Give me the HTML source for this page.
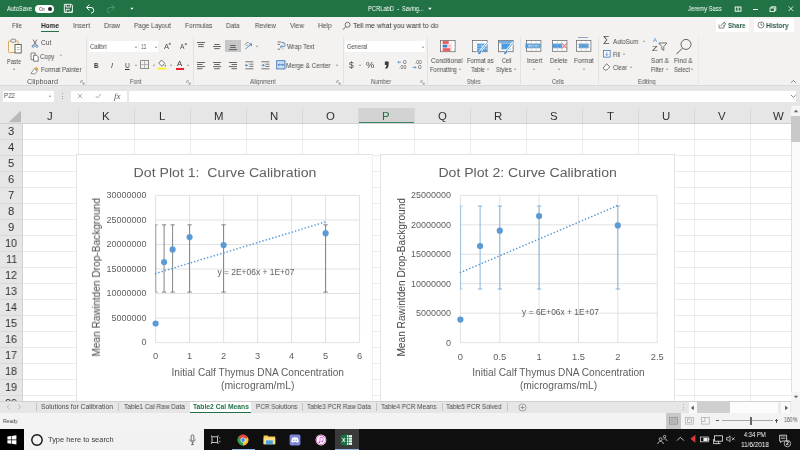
<!DOCTYPE html>
<html lang="en">
<head>
<meta charset="utf-8">
<title>PCRLabD - Excel</title>
<style>
html,body{margin:0;padding:0;}
body{width:800px;height:450px;overflow:hidden;position:relative;background:#e6e6e6;font-family:"Liberation Sans",sans-serif;}
.sec{position:absolute;left:0;width:800px;overflow:hidden;}
.b{position:absolute;display:block;}
.t{position:absolute;white-space:nowrap;line-height:1;transform-origin:0 50%;will-change:transform;}
svg text{font-family:"Liberation Sans",sans-serif;white-space:pre;}
svg.b{will-change:transform;}
</style>
</head>
<body>
<div class="sec" id="titlebar" style="top:0.0px;height:17.0px;background:#217346;">
<span class="t" style="left:7.0px;top:5.9px;font-size:6.5px;color:#fff;transform:scaleX(0.887);">AutoSave</span>
<div class="b" style="left:35.0px;top:4.5px;width:19.0px;height:8.5px;background:#fff;border-radius:4.5px;"></div>
<span class="t" style="left:38.5px;top:6.8px;font-size:5.0px;color:#333;transform:scaleX(0.900);">On</span>
<div class="b" style="left:48.3px;top:6.7px;width:4.0px;height:4.0px;background:#222;border-radius:50%;"></div>
<svg class="b" style="left:63.4px;top:2.6px" width="10.8" height="10.8" viewBox="0 0 12 12"><path d="M1.5 1.5h8l1 1v8h-9z M3.5 1.5v3h5v-3 M3.5 10.5v-3.5h4" fill="none" stroke="#fff" stroke-width="1"/><path d="M6.5 8.5l2 2 2-2.5" fill="none" stroke="#fff" stroke-width="0.9"/></svg>
<svg class="b" style="left:84.0px;top:3.0px" width="12" height="12" viewBox="0 0 12 12"><path d="M5.5 1.5l-3 3 3 3 M2.5 4.5h4.5a2.8 2.8 0 0 1 0 5.6" fill="none" stroke="#fff" stroke-width="1"/></svg>
<svg class="b" style="left:105.0px;top:3.0px" width="12" height="12" viewBox="0 0 12 12"><path d="M6.5 1.5l3 3-3 3 M9.5 4.5h-4.5a2.8 2.8 0 0 0 0 5.6" fill="none" stroke="#4f9470" stroke-width="1"/></svg>
<svg class="b" style="left:128.6px;top:7.4px" width="6" height="4" viewBox="0 0 6 4"><path d="M1.2 0.8h3.4l-1.7 2z" fill="#fff"/></svg>
<span class="t" style="left:367.6px;top:5.6px;font-size:6.8px;color:#fff;transform:scaleX(0.849);">PCRLabD</span>
<span class="t" style="left:396.8px;top:5.6px;font-size:6.8px;color:#fff;transform:scaleX(1.060);">-</span>
<span class="t" style="left:402.4px;top:5.6px;font-size:6.8px;color:#fff;transform:scaleX(0.816);">Saving...</span>
<svg class="b" style="left:427.4px;top:7.4px" width="6" height="4" viewBox="0 0 6 4"><path d="M1.1 0.8h3.6l-1.8 2.1z" fill="#fff"/></svg>
<span class="t" style="left:688.0px;top:5.6px;font-size:6.8px;color:#fff;transform:scaleX(0.855);">Jeremy Sass</span>
<svg class="b" style="left:734.0px;top:5.6px" width="9" height="7" viewBox="0 0 9 7"><rect x="1.2" y="1" width="5.8" height="4.2" fill="none" stroke="#fff" stroke-width="0.9"/><path d="M4.1 1v4.2" stroke="#fff" stroke-width="0.9"/></svg>
<div class="b" style="left:752.5px;top:8.6px;width:5.0px;height:0.9px;background:#fff;"></div>
<svg class="b" style="left:768.0px;top:4.6px" width="10" height="9" viewBox="0 0 10 9"><rect x="2" y="3" width="4.4" height="3.6" fill="none" stroke="#fff" stroke-width="0.8"/><path d="M3.2 3v-1.2h4.6v3.6h-1.4" fill="none" stroke="#fff" stroke-width="0.9"/></svg>
<svg class="b" style="left:786.0px;top:4.0px" width="10" height="9" viewBox="0 0 10 9"><path d="M2.6 2.4l4.6 4.6M7.2 2.4l-4.6 4.6" stroke="#fff" stroke-width="0.8"/></svg>
</div>
<div class="sec" id="menutabs" style="top:17.0px;height:16.0px;background:#f3f2f1;">
<span class="t" style="left:12.0px;top:4.9px;font-size:7.3px;color:#4c4c4c;transform:scaleX(0.850);">File</span>
<span class="t" style="left:73.0px;top:4.9px;font-size:7.3px;color:#4c4c4c;transform:scaleX(0.931);">Insert</span>
<span class="t" style="left:104.0px;top:4.9px;font-size:7.3px;color:#4c4c4c;transform:scaleX(0.939);">Draw</span>
<span class="t" style="left:134.0px;top:4.9px;font-size:7.3px;color:#4c4c4c;transform:scaleX(0.893);">Page Layout</span>
<span class="t" style="left:184.6px;top:4.9px;font-size:7.3px;color:#4c4c4c;transform:scaleX(0.901);">Formulas</span>
<span class="t" style="left:226.4px;top:4.9px;font-size:7.3px;color:#4c4c4c;transform:scaleX(0.882);">Data</span>
<span class="t" style="left:254.6px;top:4.9px;font-size:7.3px;color:#4c4c4c;transform:scaleX(0.869);">Review</span>
<span class="t" style="left:289.6px;top:4.9px;font-size:7.3px;color:#4c4c4c;transform:scaleX(0.892);">View</span>
<span class="t" style="left:318.0px;top:4.9px;font-size:7.3px;color:#4c4c4c;transform:scaleX(0.906);">Help</span>
<span class="t" style="left:41.0px;top:4.9px;font-size:7.3px;color:#262626;transform:scaleX(0.887);font-weight:bold;">Home</span>
<div class="b" style="left:41.0px;top:13.6px;width:18.4px;height:1.3px;background:#217346;"></div>
<svg class="b" style="left:342.0px;top:4.0px" width="10" height="10" viewBox="0 0 10 10"><circle cx="5.6" cy="3.8" r="2.5" fill="none" stroke="#555" stroke-width="0.8"/><path d="M3.8 5.6l-2.8 3" stroke="#555" stroke-width="0.9"/></svg>
<span class="t" style="left:353.0px;top:4.9px;font-size:7.3px;color:#333;transform:scaleX(0.948);">Tell me what you want to do</span>
<div class="b" style="left:715.6px;top:2.0px;width:33.4px;height:12.5px;background:#fff;"></div>
<div class="b" style="left:753.6px;top:2.0px;width:40.6px;height:12.5px;background:#fff;"></div>
<svg class="b" style="left:718.0px;top:4.0px" width="8" height="8" viewBox="0 0 8 8"><path d="M1 3.5v3.5h5v-2.5 M3 5.2c0.3-1.8 1.4-2.8 3-2.9v-1.3l1.8 2-1.8 2v-1.3" fill="none" stroke="#555" stroke-width="0.7"/></svg>
<span class="t" style="left:727.6px;top:4.7px;font-size:7.3px;color:#2a5a43;transform:scaleX(0.858);font-weight:bold;">Share</span>
<svg class="b" style="left:757.0px;top:4.0px" width="8" height="8" viewBox="0 0 8 8"><circle cx="4" cy="4" r="3" fill="none" stroke="#555" stroke-width="0.7"/><path d="M4 2.2v2h1.6" fill="none" stroke="#555" stroke-width="0.7"/></svg>
<span class="t" style="left:766.4px;top:4.7px;font-size:7.3px;color:#2a5a43;transform:scaleX(0.899);font-weight:bold;">History</span>
</div>
<div class="sec" id="ribbon" style="top:33.0px;height:53.4px;background:#f3f2f1;border-bottom:1px solid #dadada;box-sizing:border-box;">
<div class="b" style="left:86.3px;top:4.0px;width:0.8px;height:47.0px;background:#e1e1e1;"></div>
<div class="b" style="left:192.5px;top:4.0px;width:0.8px;height:47.0px;background:#e1e1e1;"></div>
<div class="b" style="left:342.8px;top:4.0px;width:0.8px;height:47.0px;background:#e1e1e1;"></div>
<div class="b" style="left:426.6px;top:4.0px;width:0.8px;height:47.0px;background:#e1e1e1;"></div>
<div class="b" style="left:519.8px;top:4.0px;width:0.8px;height:47.0px;background:#e1e1e1;"></div>
<div class="b" style="left:598.0px;top:4.0px;width:0.8px;height:47.0px;background:#e1e1e1;"></div>
<div class="b" style="left:697.6px;top:4.0px;width:0.8px;height:47.0px;background:#e8e8e8;"></div>
<svg class="b" style="left:7.4px;top:4.0px" width="16" height="18" viewBox="0 0 16 18"><rect x="1.5" y="4" width="9.5" height="11.5" rx="0.8" fill="#fbf3e3" stroke="#d9a864" stroke-width="1"/><rect x="4" y="2.2" width="4.6" height="3" rx="0.8" fill="#f3f3f3" stroke="#777" stroke-width="0.8"/><rect x="8" y="7.5" width="6.2" height="8.5" fill="#fff" stroke="#555" stroke-width="0.9"/><path d="M9.8 10.5h2.6M9.8 12.5h2.6" stroke="#888" stroke-width="0.6"/></svg>
<span class="t" style="left:7.0px;top:25.6px;font-size:6.6px;color:#4c4c4c;transform:scaleX(0.830);">Paste</span>
<svg class="b" style="left:12.0px;top:34.8px" width="4" height="3" viewBox="0 0 4 3"><path d="M0.8 0.8h2.4l-1.2 1.5z" fill="#7a7a7a"/></svg>
<svg class="b" style="left:31.0px;top:6.4px" width="8" height="9" viewBox="0 0 8 9"><path d="M2.2 0.6l3 5.6M5.8 0.6l-3 5.6" stroke="#555" stroke-width="0.8"/><circle cx="2.2" cy="7.2" r="1.1" fill="none" stroke="#3a78b8" stroke-width="0.8"/><circle cx="5.8" cy="7.2" r="1.1" fill="none" stroke="#3a78b8" stroke-width="0.8"/></svg>
<span class="t" style="left:40.5px;top:6.5px;font-size:6.6px;color:#4c4c4c;transform:scaleX(0.974);">Cut</span>
<svg class="b" style="left:29.5px;top:19.2px" width="10" height="10" viewBox="0 0 10 10"><path d="M1 1h4.2v6.6h-4.2z" fill="#fff" stroke="#666" stroke-width="0.8"/><path d="M3.6 3.2h3l1.6 1.6v4.4h-4.6z" fill="#fff" stroke="#555" stroke-width="0.8"/></svg>
<span class="t" style="left:40.0px;top:20.9px;font-size:6.6px;color:#4c4c4c;transform:scaleX(0.941);">Copy</span>
<svg class="b" style="left:58.6px;top:21.4px" width="4" height="3" viewBox="0 0 4 3"><path d="M0.8 0.8h2.4l-1.2 1.5z" fill="#999"/></svg>
<svg class="b" style="left:30.0px;top:33.0px" width="10" height="9" viewBox="0 0 10 9"><path d="M6.2 0.8l2.6 2.4-1.6 1.6-2.6-2.4z" fill="#e8a33c"/><path d="M4.4 2.6l2.8 2.6-2.4 2.8-3.8-0.6z" fill="#fff" stroke="#666" stroke-width="0.7"/></svg>
<span class="t" style="left:40.6px;top:34.1px;font-size:6.6px;color:#4c4c4c;transform:scaleX(0.926);">Format Painter</span>
<span class="t" style="left:27.0px;top:45.9px;font-size:6.3px;color:#555;transform:scaleX(1.150);">Clipboard</span>
<svg class="b" style="left:80.0px;top:47.0px" width="5" height="5" viewBox="0 0 5 5"><path d="M0.8 0.8h2.2M0.8 0.8v2.2 M2.2 2.2l2 2m0-1.6v1.6h-1.6" fill="none" stroke="#777" stroke-width="0.6"/></svg>
<div class="b" style="left:88.7px;top:8.3px;width:49.0px;height:10.8px;background:#fff;"></div>
<div class="b" style="left:139.0px;top:8.3px;width:19.0px;height:10.8px;background:#fff;"></div>
<span class="t" style="left:90.3px;top:11.1px;font-size:6.6px;color:#4c4c4c;transform:scaleX(0.893);">Calibri</span>
<svg class="b" style="left:133.8px;top:12.5px" width="4" height="3" viewBox="0 0 4 3"><path d="M0.8 0.8h2.4l-1.2 1.5z" fill="#7a7a7a"/></svg>
<span class="t" style="left:141.0px;top:11.1px;font-size:6.6px;color:#4c4c4c;transform:scaleX(0.759);">11</span>
<svg class="b" style="left:153.5px;top:12.5px" width="4" height="3" viewBox="0 0 4 3"><path d="M0.8 0.8h2.4l-1.2 1.5z" fill="#7a7a7a"/></svg>
<span class="t" style="left:163.5px;top:10.4px;font-size:7.6px;color:#4c4c4c;transform:scaleX(1.006);">A</span>
<svg class="b" style="left:168.4px;top:9.0px" width="4" height="3" viewBox="0 0 4 3"><path d="M0.4 2.4l1.4-1.8 1.4 1.8z" fill="#555"/></svg>
<span class="t" style="left:180.0px;top:11.3px;font-size:6.6px;color:#4c4c4c;transform:scaleX(0.999);">A</span>
<svg class="b" style="left:184.4px;top:9.6px" width="4" height="3" viewBox="0 0 4 3"><path d="M0.4 0.6l1.4 1.8 1.4-1.8z" fill="#555"/></svg>
<span class="t" style="left:93.6px;top:28.9px;font-size:7.0px;color:#333;transform:scaleX(0.870);font-weight:bold;">B</span>
<span class="t" style="left:110.6px;top:28.9px;font-size:7.0px;color:#333;transform:scaleX(1.028);font-style:italic;">I</span>
<span class="t" style="left:124.8px;top:28.7px;font-size:7.0px;color:#333;transform:scaleX(0.910);text-decoration:underline;">U</span>
<svg class="b" style="left:133.5px;top:30.5px" width="4" height="3" viewBox="0 0 4 3"><path d="M0.8 0.8h2.4l-1.2 1.5z" fill="#8a8a8a"/></svg>
<svg class="b" style="left:140.0px;top:27.0px" width="10" height="10" viewBox="0 0 10 10"><rect x="0.6" y="0.6" width="8" height="8" fill="none" stroke="#777" stroke-width="0.8"/><path d="M4.6 0.6v8M0.6 4.6h8" stroke="#999" stroke-width="0.7"/></svg>
<svg class="b" style="left:151.5px;top:30.5px" width="4" height="3" viewBox="0 0 4 3"><path d="M0.8 0.8h2.4l-1.2 1.5z" fill="#8a8a8a"/></svg>
<svg class="b" style="left:157.0px;top:26.0px" width="10" height="11" viewBox="0 0 10 11"><path d="M4.6 1l3.2 3.4-3 2.8-3-3z" fill="#fff" stroke="#555" stroke-width="0.8"/><path d="M8.2 5.4c0.8 1 0.8 1.8 0 2-0.8-0.2-0.8-1 0-2z" fill="#555"/><rect x="0.4" y="8.6" width="9" height="2" fill="#ffee33"/></svg>
<svg class="b" style="left:168.5px;top:30.5px" width="4" height="3" viewBox="0 0 4 3"><path d="M0.8 0.8h2.4l-1.2 1.5z" fill="#8a8a8a"/></svg>
<span class="t" style="left:177.4px;top:27.4px;font-size:7.2px;color:#333;transform:scaleX(1.083);">A</span>
<div class="b" style="left:175.6px;top:35.0px;width:8.6px;height:2.0px;background:#e8212a;"></div>
<svg class="b" style="left:186.0px;top:30.5px" width="4" height="3" viewBox="0 0 4 3"><path d="M0.8 0.8h2.4l-1.2 1.5z" fill="#8a8a8a"/></svg>
<span class="t" style="left:130.0px;top:46.3px;font-size:6.3px;color:#555;transform:scaleX(0.904);">Font</span>
<svg class="b" style="left:185.5px;top:47.0px" width="5" height="5" viewBox="0 0 5 5"><path d="M0.8 0.8h2.2M0.8 0.8v2.2 M2.2 2.2l2 2m0-1.6v1.6h-1.6" fill="none" stroke="#777" stroke-width="0.6"/></svg>
<div class="b" style="left:225.3px;top:7.4px;width:15.8px;height:12.0px;background:#c6c6c6;"></div>
<svg class="b" style="left:197.3px;top:9.2px" width="8" height="7.3" viewBox="0 0 8 7.3"><rect x="0.0" y="0.0" width="8.0" height="0.9" fill="#555"/><rect x="1.2" y="2.1" width="5.5" height="0.9" fill="#555"/><rect x="1.2" y="4.2" width="5.5" height="0.9" fill="#555"/></svg>
<svg class="b" style="left:213.3px;top:10.6px" width="8" height="7.3" viewBox="0 0 8 7.3"><rect x="1.2" y="0.0" width="5.5" height="0.9" fill="#555"/><rect x="0.0" y="2.1" width="8.0" height="0.9" fill="#555"/><rect x="1.2" y="4.2" width="5.5" height="0.9" fill="#555"/></svg>
<svg class="b" style="left:229.3px;top:12.2px" width="8" height="7.3" viewBox="0 0 8 7.3"><rect x="1.2" y="0.0" width="5.5" height="0.9" fill="#555"/><rect x="1.2" y="2.1" width="5.5" height="0.9" fill="#555"/><rect x="0.0" y="4.2" width="8.0" height="0.9" fill="#555"/></svg>
<svg class="b" style="left:244.0px;top:8.0px" width="10" height="10" viewBox="0 0 10 10"><path d="M1.2 8.2l6.4-5.4M7.6 2.8l-2.6 0.2M7.6 2.8l-0.4 2.6" stroke="#3a78b8" stroke-width="0.8" fill="none"/><path d="M1 3.6l2.6-2.6 1 1M2.4 5l1.6-1.6" stroke="#555" stroke-width="0.7" fill="none"/></svg>
<svg class="b" style="left:254.5px;top:12.0px" width="4" height="3" viewBox="0 0 4 3"><path d="M0.8 0.8h2.4l-1.2 1.5z" fill="#8a8a8a"/></svg>
<svg class="b" style="left:277.0px;top:8.0px" width="9" height="10" viewBox="0 0 9 10"><path d="M0.6 1h3.4M0.6 3.4h2.4M0.6 8.2h2.4" stroke="#555" stroke-width="0.8"/><path d="M4.4 1.6h1.6a2 2 0 0 1 0 4.2h-2.6M4.6 4.4l-1.4 1.4 1.4 1.4" stroke="#3a78b8" stroke-width="0.8" fill="none"/><path d="M6 0.6v8.6" stroke="#888" stroke-width="0.5" stroke-dasharray="0.8 0.8"/></svg>
<span class="t" style="left:286.6px;top:10.5px;font-size:6.6px;color:#4c4c4c;transform:scaleX(0.930);">Wrap Text</span>
<svg class="b" style="left:197.3px;top:28.6px" width="8" height="9.4" viewBox="0 0 8 9.4"><rect x="0.0" y="0.0" width="8.0" height="0.9" fill="#555"/><rect x="0.0" y="2.1" width="5.5" height="0.9" fill="#555"/><rect x="0.0" y="4.2" width="8.0" height="0.9" fill="#555"/><rect x="0.0" y="6.3" width="5.5" height="0.9" fill="#555"/></svg>
<svg class="b" style="left:213.3px;top:28.6px" width="8" height="9.4" viewBox="0 0 8 9.4"><rect x="0.0" y="0.0" width="8.0" height="0.9" fill="#555"/><rect x="1.2" y="2.1" width="5.5" height="0.9" fill="#555"/><rect x="0.0" y="4.2" width="8.0" height="0.9" fill="#555"/><rect x="1.2" y="6.3" width="5.5" height="0.9" fill="#555"/></svg>
<svg class="b" style="left:229.3px;top:28.6px" width="8" height="9.4" viewBox="0 0 8 9.4"><rect x="0.0" y="0.0" width="8.0" height="0.9" fill="#555"/><rect x="2.5" y="2.1" width="5.5" height="0.9" fill="#555"/><rect x="0.0" y="4.2" width="8.0" height="0.9" fill="#555"/><rect x="2.5" y="6.3" width="5.5" height="0.9" fill="#555"/></svg>
<svg class="b" style="left:245.0px;top:28.0px" width="9" height="9" viewBox="0 0 9 9"><path d="M0.4 0.8h8M0.4 7.8h8M4.4 3.2h4M4.4 5.4h4" stroke="#555" stroke-width="0.8"/><path d="M3.2 4.3h-2.8M1.6 3l-1.3 1.3 1.3 1.3" stroke="#3a78b8" stroke-width="0.8" fill="none"/></svg>
<svg class="b" style="left:261.0px;top:28.0px" width="9" height="9" viewBox="0 0 9 9"><path d="M0.4 0.8h8M0.4 7.8h8M4.4 3.2h4M4.4 5.4h4" stroke="#555" stroke-width="0.8"/><path d="M0.4 4.3h2.8M2 3l1.3 1.3-1.3 1.3" stroke="#3a78b8" stroke-width="0.8" fill="none"/></svg>
<svg class="b" style="left:275.5px;top:27.4px" width="10" height="10" viewBox="0 0 10 10"><rect x="0.7" y="0.7" width="8.2" height="8.2" fill="#cfe2f6" stroke="#3a78b8" stroke-width="0.9"/><path d="M2.2 4.8h5.2M3.4 3.6l-1.2 1.2 1.2 1.2M6.2 3.6l1.2 1.2-1.2 1.2" stroke="#2b5f9e" stroke-width="0.7" fill="none"/></svg>
<span class="t" style="left:286.0px;top:29.5px;font-size:6.6px;color:#4c4c4c;transform:scaleX(0.959);">Merge &amp; Center</span>
<svg class="b" style="left:335.0px;top:31.0px" width="4" height="3" viewBox="0 0 4 3"><path d="M0.8 0.8h2.4l-1.2 1.5z" fill="#8a8a8a"/></svg>
<span class="t" style="left:250.4px;top:46.3px;font-size:6.3px;color:#555;transform:scaleX(0.914);">Alignment</span>
<svg class="b" style="left:336.0px;top:47.0px" width="5" height="5" viewBox="0 0 5 5"><path d="M0.8 0.8h2.2M0.8 0.8v2.2 M2.2 2.2l2 2m0-1.6v1.6h-1.6" fill="none" stroke="#777" stroke-width="0.6"/></svg>
<div class="b" style="left:345.0px;top:8.3px;width:79.7px;height:10.8px;background:#fff;"></div>
<span class="t" style="left:346.6px;top:11.1px;font-size:6.6px;color:#4c4c4c;transform:scaleX(0.869);">General</span>
<svg class="b" style="left:420.5px;top:12.5px" width="4" height="3" viewBox="0 0 4 3"><path d="M0.8 0.8h2.4l-1.2 1.5z" fill="#7a7a7a"/></svg>
<span class="t" style="left:349.4px;top:28.3px;font-size:8.4px;color:#444;transform:scaleX(0.985);">$</span>
<svg class="b" style="left:357.6px;top:31.0px" width="4" height="3" viewBox="0 0 4 3"><path d="M0.8 0.8h2.4l-1.2 1.5z" fill="#8a8a8a"/></svg>
<span class="t" style="left:366.0px;top:28.5px;font-size:8.2px;color:#444;transform:scaleX(1.152);">%</span>
<span class="t" style="left:383.2px;top:12.9px;font-size:23.0px;color:#3a3a3a;transform:scaleX(1.158);font-weight:bold;">,</span>
<svg class="b" style="left:397.0px;top:27.0px" width="10" height="10" viewBox="0 0 10 10"><path d="M4.2 2.2h-3.4M2 1l-1.2 1.2 1.2 1.2" stroke="#3a78b8" stroke-width="0.7" fill="none"/></svg>
<span class="t" style="left:402.6px;top:28.0px;font-size:4.6px;color:#555;transform:scaleX(1.407);">0</span>
<span class="t" style="left:399.0px;top:32.8px;font-size:4.6px;color:#555;transform:scaleX(1.157);">.00</span>
<svg class="b" style="left:412.0px;top:27.0px" width="10" height="10" viewBox="0 0 10 10"><path d="M0.6 7.4h3.4M2.8 6.2l1.2 1.2-1.2 1.2" stroke="#3a78b8" stroke-width="0.7" fill="none"/></svg>
<span class="t" style="left:414.6px;top:28.0px;font-size:4.6px;color:#555;transform:scaleX(1.063);">.00</span>
<span class="t" style="left:417.8px;top:32.8px;font-size:4.6px;color:#555;transform:scaleX(1.407);">0</span>
<span class="t" style="left:371.0px;top:46.3px;font-size:6.3px;color:#555;transform:scaleX(0.893);">Number</span>
<svg class="b" style="left:420.0px;top:47.0px" width="5" height="5" viewBox="0 0 5 5"><path d="M0.8 0.8h2.2M0.8 0.8v2.2 M2.2 2.2l2 2m0-1.6v1.6h-1.6" fill="none" stroke="#777" stroke-width="0.6"/></svg>
<svg class="b" style="left:439.6px;top:7.0px" width="16" height="13" viewBox="0 0 16 13"><rect x="0.5" y="0.5" width="14.6" height="11.2" fill="#fff" stroke="#6a6a6a" stroke-width="0.8"/><rect x="2.4" y="1" width="6.4" height="3.2" fill="#ee5f63"/><rect x="2.4" y="4.5" width="5" height="3.2" fill="#3f7fc4"/><rect x="7.6" y="4.5" width="3.6" height="3.2" fill="#f7c3c4"/><rect x="2.4" y="8" width="8" height="3.2" fill="#ee5f63"/><path d="M0.5 4.3h14.6M0.5 7.9h14.6M2.3 0.5v11.2M11.6 0.5v11.2" stroke="#fff" stroke-width="0.5" opacity="0.8"/><path d="M8.9 0.9v3.4M11.6 0.9v10.6" stroke="#bbb" stroke-width="0.4"/></svg>
<span class="t" style="left:431.3px;top:25.0px;font-size:6.6px;color:#4c4c4c;transform:scaleX(0.954);">Conditional</span>
<span class="t" style="left:429.8px;top:33.5px;font-size:6.6px;color:#4c4c4c;transform:scaleX(0.850);">Formatting</span>
<svg class="b" style="left:458.0px;top:35.0px" width="4" height="3" viewBox="0 0 4 3"><path d="M0.8 0.8h2.4l-1.2 1.5z" fill="#8a8a8a"/></svg>
<svg class="b" style="left:472.2px;top:7.0px" width="17" height="15" viewBox="0 0 17 15"><rect x="0.5" y="0.5" width="14.6" height="11.2" fill="#fff" stroke="#6a6a6a" stroke-width="0.8"/><rect x="5" y="3.4" width="9.7" height="8" fill="#4a9be0"/><path d="M0.5 3.2h14.6M0.5 6h14.6M0.5 8.8h14.6M4.8 0.5v11.2M9.8 0.5v11.2" stroke="#fff" stroke-width="0.5" opacity="0.85"/><path d="M0.9 3.2h3.8M0.9 6h3.8M0.9 8.8h3.8M4.8 0.9v2.3M9.8 0.9v2.3" stroke="#bbb" stroke-width="0.4"/><path d="M15.2 2.6L7.6 12.2" stroke="#fff" stroke-width="2.4"/><path d="M15 2.8L8.4 11.2" stroke="#4a9be0" stroke-width="0.9"/><path d="M8.6 10.6l1 1-1.6 2.2-2 0.4 0.6-2z" fill="#3f8fd8"/></svg>
<span class="t" style="left:466.5px;top:25.0px;font-size:6.6px;color:#4c4c4c;transform:scaleX(0.892);">Format as</span>
<span class="t" style="left:470.6px;top:33.5px;font-size:6.6px;color:#4c4c4c;transform:scaleX(0.887);">Table</span>
<svg class="b" style="left:485.6px;top:35.0px" width="4" height="3" viewBox="0 0 4 3"><path d="M0.8 0.8h2.4l-1.2 1.5z" fill="#8a8a8a"/></svg>
<svg class="b" style="left:498.4px;top:7.0px" width="17" height="15" viewBox="0 0 17 15"><rect x="0.5" y="0.5" width="14.6" height="11.2" fill="#fff" stroke="#6a6a6a" stroke-width="0.8"/><rect x="0.9" y="0.9" width="13.8" height="2.4" fill="#6fb1ea"/><rect x="3.4" y="3.3" width="9" height="6" fill="#4a9be0"/><path d="M0.9 3.3h13.8M0.9 9.3h13.8M3.4 3.3v8M12.4 3.3v8" stroke="#ccc" stroke-width="0.4"/><path d="M15.2 2.6L7.6 12.2" stroke="#fff" stroke-width="2.4"/><path d="M15 2.8L8.4 11.2" stroke="#4a9be0" stroke-width="0.9"/><path d="M8.6 10.6l1 1-1.6 2.2-2 0.4 0.6-2z" fill="#3f8fd8"/></svg>
<span class="t" style="left:501.6px;top:25.0px;font-size:6.6px;color:#4c4c4c;transform:scaleX(0.827);">Cell</span>
<span class="t" style="left:496.0px;top:33.5px;font-size:6.6px;color:#4c4c4c;transform:scaleX(0.868);">Styles</span>
<svg class="b" style="left:512.6px;top:35.0px" width="4" height="3" viewBox="0 0 4 3"><path d="M0.8 0.8h2.4l-1.2 1.5z" fill="#8a8a8a"/></svg>
<span class="t" style="left:466.5px;top:46.3px;font-size:6.3px;color:#555;transform:scaleX(0.787);">Styles</span>
<svg class="b" style="left:525.3px;top:7.2px" width="17" height="13" viewBox="-1 0 17 13"><rect x="0.5" y="0.5" width="14.4" height="10.8" fill="#fff" stroke="#707070" stroke-width="0.8"/><rect x="-0.6" y="3.6" width="15.2" height="4.6" fill="#4a9be0"/><path d="M5.3 0.9v10M10.1 0.9v10M0.9 4.1h13.6M0.9 7.7h13.6" stroke="#b5b5b5" stroke-width="0.5" fill="none"/><path d="M2.4 5.9h10.6M3.8 4.9l-1.4 1 1.4 1" stroke="#fff" stroke-width="0.6" fill="none"/></svg>
<span class="t" style="left:526.5px;top:25.0px;font-size:6.6px;color:#4c4c4c;transform:scaleX(0.915);">Insert</span>
<svg class="b" style="left:532.0px;top:35.0px" width="4" height="3" viewBox="0 0 4 3"><path d="M0.8 0.8h2.4l-1.2 1.5z" fill="#8a8a8a"/></svg>
<svg class="b" style="left:550.5px;top:7.2px" width="17" height="13" viewBox="-1 0 17 13"><rect x="0.5" y="0.5" width="14.4" height="10.8" fill="#fff" stroke="#707070" stroke-width="0.8"/><rect x="0.5" y="3.6" width="9.6" height="4.6" fill="#4a9be0"/><path d="M5.3 0.9v10M10.1 0.9v10M0.9 4.1h13.6M0.9 7.7h13.6" stroke="#b5b5b5" stroke-width="0.5" fill="none"/><path d="M10 3.4l4.8 5M14.8 3.4l-4.8 5" stroke="#e0333c" stroke-width="0.8"/></svg>
<span class="t" style="left:550.4px;top:25.0px;font-size:6.6px;color:#4c4c4c;transform:scaleX(0.912);">Delete</span>
<svg class="b" style="left:557.0px;top:35.0px" width="4" height="3" viewBox="0 0 4 3"><path d="M0.8 0.8h2.4l-1.2 1.5z" fill="#8a8a8a"/></svg>
<svg class="b" style="left:575.2px;top:7.2px" width="17" height="13" viewBox="-1 0 17 13"><rect x="0.5" y="0.5" width="14.4" height="10.8" fill="#fff" stroke="#707070" stroke-width="0.8"/><rect x="2.8" y="3.6" width="9.8" height="4.6" fill="#4a9be0"/><path d="M5.3 0.9v10M10.1 0.9v10M0.9 4.1h13.6M0.9 7.7h13.6" stroke="#b5b5b5" stroke-width="0.5" fill="none"/></svg>
<div class="b" style="left:578.4px;top:4.4px;width:10.0px;height:1.1px;background:#8fa9c4;"></div>
<span class="t" style="left:573.8px;top:25.0px;font-size:6.6px;color:#4c4c4c;transform:scaleX(0.942);">Format</span>
<svg class="b" style="left:581.5px;top:35.0px" width="4" height="3" viewBox="0 0 4 3"><path d="M0.8 0.8h2.4l-1.2 1.5z" fill="#8a8a8a"/></svg>
<span class="t" style="left:552.0px;top:46.3px;font-size:6.3px;color:#555;transform:scaleX(0.857);">Cells</span>
<span class="t" style="left:602.6px;top:2.9px;font-size:10.4px;color:#505050;transform:scaleX(1.027);">Σ</span>
<span class="t" style="left:612.5px;top:5.7px;font-size:6.6px;color:#4c4c4c;transform:scaleX(0.932);">AutoSum</span>
<svg class="b" style="left:641.5px;top:7.4px" width="4" height="3" viewBox="0 0 4 3"><path d="M0.8 0.8h2.4l-1.2 1.5z" fill="#8a8a8a"/></svg>
<svg class="b" style="left:602.5px;top:17.0px" width="8" height="8" viewBox="0 0 8 8"><rect x="0.5" y="0.5" width="6.6" height="6.6" fill="#fff" stroke="#3a78b8" stroke-width="0.8"/><path d="M3.8 1.8v3.6M2.4 4.2l1.4 1.4 1.4-1.4" stroke="#3a78b8" stroke-width="0.7" fill="none"/></svg>
<span class="t" style="left:613.0px;top:18.7px;font-size:6.6px;color:#4c4c4c;transform:scaleX(0.830);">Fill</span>
<svg class="b" style="left:621.5px;top:20.4px" width="4" height="3" viewBox="0 0 4 3"><path d="M0.8 0.8h2.4l-1.2 1.5z" fill="#8a8a8a"/></svg>
<svg class="b" style="left:602.0px;top:30.0px" width="9" height="8" viewBox="0 0 9 8"><path d="M4.6 0.8l3.2 3-3 3.2h-2l-1.8-1.8z" fill="#fff" stroke="#555" stroke-width="0.8"/></svg>
<span class="t" style="left:613.0px;top:31.7px;font-size:6.6px;color:#4c4c4c;transform:scaleX(0.888);">Clear</span>
<svg class="b" style="left:628.5px;top:33.4px" width="4" height="3" viewBox="0 0 4 3"><path d="M0.8 0.8h2.4l-1.2 1.5z" fill="#8a8a8a"/></svg>
<span class="t" style="left:652.6px;top:4.8px;font-size:5.6px;color:#4a90d6;transform:scaleX(1.071);">A</span>
<span class="t" style="left:652.0px;top:11.8px;font-size:7.6px;color:#444;transform:scaleX(1.206);">Z</span>
<svg class="b" style="left:657.8px;top:8.6px" width="10" height="10" viewBox="0 0 10 10"><path d="M0.8 1h8l-3 3.6v3.8l-2-1.2v-2.6z" fill="none" stroke="#555" stroke-width="0.8"/></svg>
<span class="t" style="left:651.0px;top:25.0px;font-size:6.6px;color:#4c4c4c;transform:scaleX(0.971);">Sort &amp;</span>
<span class="t" style="left:651.0px;top:33.5px;font-size:6.6px;color:#4c4c4c;transform:scaleX(0.859);">Filter</span>
<svg class="b" style="left:664.6px;top:35.0px" width="4" height="3" viewBox="0 0 4 3"><path d="M0.8 0.8h2.4l-1.2 1.5z" fill="#8a8a8a"/></svg>
<svg class="b" style="left:675.0px;top:5.2px" width="18" height="18" viewBox="0 0 18 18"><circle cx="11" cy="6.4" r="5" fill="none" stroke="#555" stroke-width="0.9"/><path d="M7.4 10.2l-6 6" stroke="#555" stroke-width="1"/></svg>
<span class="t" style="left:674.4px;top:25.0px;font-size:6.6px;color:#4c4c4c;transform:scaleX(0.965);">Find &amp;</span>
<span class="t" style="left:673.5px;top:33.5px;font-size:6.6px;color:#4c4c4c;transform:scaleX(0.867);">Select</span>
<svg class="b" style="left:690.2px;top:35.0px" width="4" height="3" viewBox="0 0 4 3"><path d="M0.8 0.8h2.4l-1.2 1.5z" fill="#8a8a8a"/></svg>
<span class="t" style="left:638.4px;top:46.3px;font-size:6.3px;color:#555;transform:scaleX(0.914);">Editing</span>
<svg class="b" style="left:789.6px;top:46.4px" width="7" height="5" viewBox="0 0 7 5"><path d="M1 3.8l2.4-2.4 2.4 2.4" fill="none" stroke="#666" stroke-width="0.8"/></svg>
</div>
<div class="sec" id="formulabar" style="top:86.4px;height:20.0px;background:#e6e6e6;">
<div class="b" style="left:2.6px;top:4.9px;width:51.6px;height:10.4px;background:#fff;"></div>
<span class="t" style="left:4.4px;top:6.8px;font-size:6.6px;color:#4c4c4c;transform:scaleX(0.937);">P22</span>
<svg class="b" style="left:47.5px;top:9.0px" width="4" height="3" viewBox="0 0 4 3"><path d="M0.8 0.8h2.4l-1.2 1.5z" fill="#7a7a7a"/></svg>
<div class="b" style="left:61.6px;top:6.9px;width:0.8px;height:0.8px;background:#999;"></div>
<div class="b" style="left:61.6px;top:9.5px;width:0.8px;height:0.8px;background:#999;"></div>
<div class="b" style="left:61.6px;top:12.1px;width:0.8px;height:0.8px;background:#999;"></div>
<div class="b" style="left:71.0px;top:4.9px;width:56.0px;height:10.4px;background:#fff;"></div>
<svg class="b" style="left:77.0px;top:7.0px" width="6" height="6" viewBox="0 0 6 6"><path d="M0.8 0.8l4.4 4.4M5.2 0.8l-4.4 4.4" stroke="#999" stroke-width="0.8"/></svg>
<svg class="b" style="left:95.0px;top:7.0px" width="7" height="6" viewBox="0 0 7 6"><path d="M0.8 3l1.8 2 3.4-4.2" stroke="#999" stroke-width="0.8" fill="none"/></svg>
<span class="t" style="left:114.0px;top:5.3px;font-size:9.0px;color:#555;transform:scaleX(1.000);font-style:italic;font-family:'Liberation Serif',serif;">fx</span>
<div class="b" style="left:129.0px;top:4.9px;width:667.4px;height:10.4px;background:#fff;"></div>
<svg class="b" style="left:789.6px;top:7.8px" width="7" height="5" viewBox="0 0 7 5"><path d="M1 1l2.4 2.4 2.4-2.4" fill="none" stroke="#666" stroke-width="0.8"/></svg>
</div>
<div class="sec" id="grid" style="top:106.4px;height:295.0px;background:#fff;">
<div class="b" style="left:0.0px;top:0.0px;width:790.6px;height:17.0px;background:#e6e6e6;"></div>
<svg class="b" style="left:8.0px;top:3.6px" width="14" height="13" viewBox="0 0 14 13"><path d="M13 0.6v11.6h-12.4z" fill="#b9b9b9"/></svg>
<span class="t" style="left:47.4px;top:4.4px;font-size:11.4px;color:#303030;transform:scaleX(1.000);">J</span>
<span class="t" style="left:102.4px;top:4.4px;font-size:11.4px;color:#303030;transform:scaleX(1.000);">K</span>
<div class="b" style="left:77.8px;top:1.6px;width:0.8px;height:15.4px;background:#d8d8d8;"></div>
<span class="t" style="left:159.0px;top:4.4px;font-size:11.4px;color:#303030;transform:scaleX(1.000);">L</span>
<div class="b" style="left:133.8px;top:1.6px;width:0.8px;height:15.4px;background:#d8d8d8;"></div>
<span class="t" style="left:213.5px;top:4.4px;font-size:11.4px;color:#303030;transform:scaleX(1.000);">M</span>
<div class="b" style="left:189.8px;top:1.6px;width:0.8px;height:15.4px;background:#d8d8d8;"></div>
<span class="t" style="left:270.1px;top:4.4px;font-size:11.4px;color:#303030;transform:scaleX(1.000);">N</span>
<div class="b" style="left:245.8px;top:1.6px;width:0.8px;height:15.4px;background:#d8d8d8;"></div>
<span class="t" style="left:325.8px;top:4.4px;font-size:11.4px;color:#303030;transform:scaleX(1.000);">O</span>
<div class="b" style="left:301.8px;top:1.6px;width:0.8px;height:15.4px;background:#d8d8d8;"></div>
<div class="b" style="left:358.2px;top:1.2px;width:56.0px;height:15.8px;background:#d3d3d3;border-bottom:1.4px solid #3d8560;box-sizing:border-box;"></div>
<span class="t" style="left:382.4px;top:4.4px;font-size:11.4px;color:#217346;transform:scaleX(1.000);">P</span>
<div class="b" style="left:357.8px;top:1.6px;width:0.8px;height:15.4px;background:#d8d8d8;"></div>
<span class="t" style="left:437.8px;top:4.4px;font-size:11.4px;color:#303030;transform:scaleX(1.000);">Q</span>
<div class="b" style="left:413.8px;top:1.6px;width:0.8px;height:15.4px;background:#d8d8d8;"></div>
<span class="t" style="left:494.1px;top:4.4px;font-size:11.4px;color:#303030;transform:scaleX(1.000);">R</span>
<div class="b" style="left:469.8px;top:1.6px;width:0.8px;height:15.4px;background:#d8d8d8;"></div>
<span class="t" style="left:550.4px;top:4.4px;font-size:11.4px;color:#303030;transform:scaleX(1.000);">S</span>
<div class="b" style="left:525.8px;top:1.6px;width:0.8px;height:15.4px;background:#d8d8d8;"></div>
<span class="t" style="left:606.7px;top:4.4px;font-size:11.4px;color:#303030;transform:scaleX(1.000);">T</span>
<div class="b" style="left:581.8px;top:1.6px;width:0.8px;height:15.4px;background:#d8d8d8;"></div>
<span class="t" style="left:662.1px;top:4.4px;font-size:11.4px;color:#303030;transform:scaleX(1.000);">U</span>
<div class="b" style="left:637.8px;top:1.6px;width:0.8px;height:15.4px;background:#d8d8d8;"></div>
<span class="t" style="left:718.4px;top:4.4px;font-size:11.4px;color:#303030;transform:scaleX(1.000);">V</span>
<div class="b" style="left:693.8px;top:1.6px;width:0.8px;height:15.4px;background:#d8d8d8;"></div>
<span class="t" style="left:772.8px;top:4.4px;font-size:11.4px;color:#303030;transform:scaleX(1.000);">W</span>
<div class="b" style="left:749.8px;top:1.6px;width:0.8px;height:15.4px;background:#d8d8d8;"></div>
<div class="b" style="left:0.0px;top:17.0px;width:22.2px;height:278.0px;background:#e6e6e6;"></div>
<span class="t" style="left:8.2px;top:20.0px;font-size:11.3px;color:#303030;transform:scaleX(0.954);">3</span>
<div class="b" style="left:0.0px;top:32.6px;width:22.2px;height:0.8px;background:#dadada;"></div>
<span class="t" style="left:8.2px;top:36.0px;font-size:11.3px;color:#303030;transform:scaleX(0.954);">4</span>
<div class="b" style="left:0.0px;top:48.6px;width:22.2px;height:0.8px;background:#dadada;"></div>
<span class="t" style="left:8.2px;top:52.0px;font-size:11.3px;color:#303030;transform:scaleX(0.954);">5</span>
<div class="b" style="left:0.0px;top:64.6px;width:22.2px;height:0.8px;background:#dadada;"></div>
<span class="t" style="left:8.2px;top:68.0px;font-size:11.3px;color:#303030;transform:scaleX(0.954);">6</span>
<div class="b" style="left:0.0px;top:80.6px;width:22.2px;height:0.8px;background:#dadada;"></div>
<span class="t" style="left:8.2px;top:84.0px;font-size:11.3px;color:#303030;transform:scaleX(0.954);">7</span>
<div class="b" style="left:0.0px;top:96.6px;width:22.2px;height:0.8px;background:#dadada;"></div>
<span class="t" style="left:8.2px;top:100.0px;font-size:11.3px;color:#303030;transform:scaleX(0.954);">8</span>
<div class="b" style="left:0.0px;top:112.6px;width:22.2px;height:0.8px;background:#dadada;"></div>
<span class="t" style="left:8.2px;top:116.0px;font-size:11.3px;color:#303030;transform:scaleX(0.954);">9</span>
<div class="b" style="left:0.0px;top:128.6px;width:22.2px;height:0.8px;background:#dadada;"></div>
<span class="t" style="left:5.2px;top:132.0px;font-size:11.3px;color:#303030;transform:scaleX(0.954);">10</span>
<div class="b" style="left:0.0px;top:144.6px;width:22.2px;height:0.8px;background:#dadada;"></div>
<span class="t" style="left:5.6px;top:148.0px;font-size:11.3px;color:#303030;transform:scaleX(0.954);">11</span>
<div class="b" style="left:0.0px;top:160.6px;width:22.2px;height:0.8px;background:#dadada;"></div>
<span class="t" style="left:5.2px;top:164.0px;font-size:11.3px;color:#303030;transform:scaleX(0.954);">12</span>
<div class="b" style="left:0.0px;top:176.6px;width:22.2px;height:0.8px;background:#dadada;"></div>
<span class="t" style="left:5.2px;top:180.0px;font-size:11.3px;color:#303030;transform:scaleX(0.954);">13</span>
<div class="b" style="left:0.0px;top:192.6px;width:22.2px;height:0.8px;background:#dadada;"></div>
<span class="t" style="left:5.2px;top:196.0px;font-size:11.3px;color:#303030;transform:scaleX(0.954);">14</span>
<div class="b" style="left:0.0px;top:208.6px;width:22.2px;height:0.8px;background:#dadada;"></div>
<span class="t" style="left:5.2px;top:212.0px;font-size:11.3px;color:#303030;transform:scaleX(0.954);">15</span>
<div class="b" style="left:0.0px;top:224.6px;width:22.2px;height:0.8px;background:#dadada;"></div>
<span class="t" style="left:5.2px;top:228.0px;font-size:11.3px;color:#303030;transform:scaleX(0.954);">16</span>
<div class="b" style="left:0.0px;top:240.6px;width:22.2px;height:0.8px;background:#dadada;"></div>
<span class="t" style="left:5.2px;top:244.0px;font-size:11.3px;color:#303030;transform:scaleX(0.954);">17</span>
<div class="b" style="left:0.0px;top:256.6px;width:22.2px;height:0.8px;background:#dadada;"></div>
<span class="t" style="left:5.2px;top:260.0px;font-size:11.3px;color:#303030;transform:scaleX(0.954);">18</span>
<div class="b" style="left:0.0px;top:272.6px;width:22.2px;height:0.8px;background:#dadada;"></div>
<span class="t" style="left:5.2px;top:276.0px;font-size:11.3px;color:#303030;transform:scaleX(0.954);">19</span>
<div class="b" style="left:0.0px;top:288.6px;width:22.2px;height:0.8px;background:#dadada;"></div>
<span class="t" style="left:5.2px;top:292.0px;font-size:11.3px;color:#303030;transform:scaleX(0.954);">20</span>
<div class="b" style="left:0.0px;top:304.6px;width:22.2px;height:0.8px;background:#dadada;"></div>
<div class="b" style="left:22.0px;top:17.0px;width:0.8px;height:278.0px;background:#d2d2d2;"></div>
<div class="b" style="left:0.0px;top:16.6px;width:790.6px;height:0.8px;background:#d2d2d2;"></div>
<div class="b" style="left:77.8px;top:17.4px;width:0.8px;height:278.0px;background:#ebebeb;"></div>
<div class="b" style="left:133.8px;top:17.4px;width:0.8px;height:278.0px;background:#ebebeb;"></div>
<div class="b" style="left:189.8px;top:17.4px;width:0.8px;height:278.0px;background:#ebebeb;"></div>
<div class="b" style="left:245.8px;top:17.4px;width:0.8px;height:278.0px;background:#ebebeb;"></div>
<div class="b" style="left:301.8px;top:17.4px;width:0.8px;height:278.0px;background:#ebebeb;"></div>
<div class="b" style="left:357.8px;top:17.4px;width:0.8px;height:278.0px;background:#ebebeb;"></div>
<div class="b" style="left:413.8px;top:17.4px;width:0.8px;height:278.0px;background:#ebebeb;"></div>
<div class="b" style="left:469.8px;top:17.4px;width:0.8px;height:278.0px;background:#ebebeb;"></div>
<div class="b" style="left:525.8px;top:17.4px;width:0.8px;height:278.0px;background:#ebebeb;"></div>
<div class="b" style="left:581.8px;top:17.4px;width:0.8px;height:278.0px;background:#ebebeb;"></div>
<div class="b" style="left:637.8px;top:17.4px;width:0.8px;height:278.0px;background:#ebebeb;"></div>
<div class="b" style="left:693.8px;top:17.4px;width:0.8px;height:278.0px;background:#ebebeb;"></div>
<div class="b" style="left:749.8px;top:17.4px;width:0.8px;height:278.0px;background:#ebebeb;"></div>
<div class="b" style="left:805.8px;top:17.4px;width:0.8px;height:278.0px;background:#ebebeb;"></div>
<div class="b" style="left:22.6px;top:32.6px;width:768.0px;height:0.8px;background:#ebebeb;"></div>
<div class="b" style="left:22.6px;top:48.6px;width:768.0px;height:0.8px;background:#ebebeb;"></div>
<div class="b" style="left:22.6px;top:64.6px;width:768.0px;height:0.8px;background:#ebebeb;"></div>
<div class="b" style="left:22.6px;top:80.6px;width:768.0px;height:0.8px;background:#ebebeb;"></div>
<div class="b" style="left:22.6px;top:96.6px;width:768.0px;height:0.8px;background:#ebebeb;"></div>
<div class="b" style="left:22.6px;top:112.6px;width:768.0px;height:0.8px;background:#ebebeb;"></div>
<div class="b" style="left:22.6px;top:128.6px;width:768.0px;height:0.8px;background:#ebebeb;"></div>
<div class="b" style="left:22.6px;top:144.6px;width:768.0px;height:0.8px;background:#ebebeb;"></div>
<div class="b" style="left:22.6px;top:160.6px;width:768.0px;height:0.8px;background:#ebebeb;"></div>
<div class="b" style="left:22.6px;top:176.6px;width:768.0px;height:0.8px;background:#ebebeb;"></div>
<div class="b" style="left:22.6px;top:192.6px;width:768.0px;height:0.8px;background:#ebebeb;"></div>
<div class="b" style="left:22.6px;top:208.6px;width:768.0px;height:0.8px;background:#ebebeb;"></div>
<div class="b" style="left:22.6px;top:224.6px;width:768.0px;height:0.8px;background:#ebebeb;"></div>
<div class="b" style="left:22.6px;top:240.6px;width:768.0px;height:0.8px;background:#ebebeb;"></div>
<div class="b" style="left:22.6px;top:256.6px;width:768.0px;height:0.8px;background:#ebebeb;"></div>
<div class="b" style="left:22.6px;top:272.6px;width:768.0px;height:0.8px;background:#ebebeb;"></div>
<div class="b" style="left:22.6px;top:288.6px;width:768.0px;height:0.8px;background:#ebebeb;"></div>
<div class="b" style="left:790.6px;top:0.0px;width:9.4px;height:295.0px;background:#fbfbfb;border-left:1px solid #e0e0e0;box-sizing:border-box;"></div>
<div class="b" style="left:791.4px;top:0.6px;width:8.6px;height:9.0px;background:#f4f4f4;"></div>
<svg class="b" style="left:792.5px;top:3.1px" width="6" height="4" viewBox="0 0 6 4"><path d="M0.8 3.2l2.2-2.4 2.2 2.4z" fill="#666"/></svg>
<div class="b" style="left:791.4px;top:9.6px;width:8.6px;height:26.4px;background:#c9c9c9;"></div>
<div class="b" style="left:791.4px;top:286.0px;width:8.6px;height:9.0px;background:#f4f4f4;"></div>
<svg class="b" style="left:792.5px;top:288.6px" width="6" height="4" viewBox="0 0 6 4"><path d="M0.8 0.8l2.2 2.4 2.2-2.4z" fill="#666"/></svg>
<svg class="b" style="left:76.0px;top:47.6px" width="297.4" height="256" viewBox="0 0 297.4 256"><rect x="0.4" y="0.4" width="296.6" height="255.2" fill="#fff" stroke="#dedede" stroke-width="0.9"/>
<path d="M79.6 188.6H283.6" stroke="#d9d9d9" stroke-width="0.8"/>
<text x="70.4" y="191.5" font-size="9.5" fill="#5e5e5e" text-anchor="end" textLength="5.0" lengthAdjust="spacingAndGlyphs">0</text>
<path d="M79.6 164.1H283.6" stroke="#d9d9d9" stroke-width="0.8"/>
<text x="70.4" y="167.0" font-size="9.5" fill="#5e5e5e" text-anchor="end" textLength="34.9" lengthAdjust="spacingAndGlyphs">5000000</text>
<path d="M79.6 139.5H283.6" stroke="#d9d9d9" stroke-width="0.8"/>
<text x="70.4" y="142.4" font-size="9.5" fill="#5e5e5e" text-anchor="end" textLength="39.9" lengthAdjust="spacingAndGlyphs">10000000</text>
<path d="M79.6 115.0H283.6" stroke="#d9d9d9" stroke-width="0.8"/>
<text x="70.4" y="117.9" font-size="9.5" fill="#5e5e5e" text-anchor="end" textLength="39.9" lengthAdjust="spacingAndGlyphs">15000000</text>
<path d="M79.6 90.5H283.6" stroke="#d9d9d9" stroke-width="0.8"/>
<text x="70.4" y="93.4" font-size="9.5" fill="#5e5e5e" text-anchor="end" textLength="39.9" lengthAdjust="spacingAndGlyphs">20000000</text>
<path d="M79.6 65.9H283.6" stroke="#d9d9d9" stroke-width="0.8"/>
<text x="70.4" y="68.8" font-size="9.5" fill="#5e5e5e" text-anchor="end" textLength="39.9" lengthAdjust="spacingAndGlyphs">25000000</text>
<path d="M79.6 41.4H283.6" stroke="#d9d9d9" stroke-width="0.8"/>
<text x="70.4" y="44.3" font-size="9.5" fill="#5e5e5e" text-anchor="end" textLength="39.9" lengthAdjust="spacingAndGlyphs">30000000</text>
<path d="M79.6 188.6V41.4" stroke="#d9d9d9" stroke-width="0.8"/>
<path d="M113.6 188.6V41.4" stroke="#d9d9d9" stroke-width="0.8"/>
<path d="M147.6 188.6V41.4" stroke="#d9d9d9" stroke-width="0.8"/>
<path d="M181.6 188.6V41.4" stroke="#d9d9d9" stroke-width="0.8"/>
<path d="M215.6 188.6V41.4" stroke="#d9d9d9" stroke-width="0.8"/>
<path d="M249.6 188.6V41.4" stroke="#d9d9d9" stroke-width="0.8"/>
<path d="M283.6 188.6V41.4" stroke="#d9d9d9" stroke-width="0.8"/>
<text x="79.6" y="205.5" font-size="9.3" fill="#5e5e5e" text-anchor="middle">0</text>
<text x="113.6" y="205.5" font-size="9.3" fill="#5e5e5e" text-anchor="middle">1</text>
<text x="147.6" y="205.5" font-size="9.3" fill="#5e5e5e" text-anchor="middle">2</text>
<text x="181.6" y="205.5" font-size="9.3" fill="#5e5e5e" text-anchor="middle">3</text>
<text x="215.6" y="205.5" font-size="9.3" fill="#5e5e5e" text-anchor="middle">4</text>
<text x="249.6" y="205.5" font-size="9.3" fill="#5e5e5e" text-anchor="middle">5</text>
<text x="283.6" y="205.5" font-size="9.3" fill="#5e5e5e" text-anchor="middle">6</text>
<path d="M79.8 70.8V138.1 M79.6 70.8h2.2 M79.6 138.1h2.2" stroke="#666" stroke-width="0.8" fill="none" opacity="0.7"/>
<path d="M88.1 70.8V138.1 M85.9 70.8h4.4 M85.9 138.1h4.4" stroke="#666" stroke-width="0.8" fill="none"/>
<path d="M96.6 70.8V138.1 M94.4 70.8h4.4 M94.4 138.1h4.4" stroke="#666" stroke-width="0.8" fill="none"/>
<path d="M113.6 70.8V138.1 M111.4 70.8h4.4 M111.4 138.1h4.4" stroke="#666" stroke-width="0.8" fill="none"/>
<path d="M147.6 70.8V138.1 M145.4 70.8h4.4 M145.4 138.1h4.4" stroke="#666" stroke-width="0.8" fill="none"/>
<path d="M249.6 70.8V138.1 M247.4 70.8h4.4 M247.4 138.1h4.4" stroke="#666" stroke-width="0.8" fill="none"/>
<path d="M79.6 119.4L249.6 67.9" stroke="#5b9bd5" stroke-width="1.6" stroke-linecap="round" stroke-dasharray="0.1 3.3" fill="none"/>
<circle cx="79.6" cy="169.5" r="3.1" fill="#5b9bd5"/>
<circle cx="88.1" cy="108.1" r="3.1" fill="#5b9bd5"/>
<circle cx="96.6" cy="95.4" r="3.1" fill="#5b9bd5"/>
<circle cx="113.6" cy="83.1" r="3.1" fill="#5b9bd5"/>
<circle cx="147.6" cy="91.0" r="3.1" fill="#5b9bd5"/>
<circle cx="249.6" cy="79.2" r="3.1" fill="#5b9bd5"/>
<text x="57.6" y="23.1" font-size="13.7" fill="#5e5e5e" textLength="182.8" lengthAdjust="spacingAndGlyphs">Dot Plot 1:  Curve Calibration</text>
<text x="141.4" y="121.2" font-size="8.8" fill="#5e5e5e" textLength="77.0" lengthAdjust="spacingAndGlyphs">y = 2E+06x + 1E+07</text>
<text transform="translate(23.9 202.6) rotate(-90)" font-size="10.8" fill="#484848" textLength="158.6" lengthAdjust="spacingAndGlyphs">Mean Rawintden Drop-Background</text>
<text x="95.5" y="222.1" font-size="10.6" fill="#5e5e5e" textLength="172.5" lengthAdjust="spacingAndGlyphs">Initial Calf Thymus DNA Concentration</text>
<text x="145.0" y="235.1" font-size="10.6" fill="#5e5e5e" textLength="73.4" lengthAdjust="spacingAndGlyphs">(microgram/mL)</text></svg>
<svg class="b" style="left:379.6px;top:47.6px" width="295" height="256" viewBox="0 0 295 256"><rect x="0.4" y="0.4" width="294.2" height="255.2" fill="#fff" stroke="#dedede" stroke-width="0.9"/>
<path d="M80.4 188.6H277.2" stroke="#d9d9d9" stroke-width="0.8"/>
<text x="71.0" y="191.5" font-size="9.5" fill="#5e5e5e" text-anchor="end" textLength="5.0" lengthAdjust="spacingAndGlyphs">0</text>
<path d="M80.4 159.2H277.2" stroke="#d9d9d9" stroke-width="0.8"/>
<text x="71.0" y="162.1" font-size="9.5" fill="#5e5e5e" text-anchor="end" textLength="34.9" lengthAdjust="spacingAndGlyphs">5000000</text>
<path d="M80.4 129.7H277.2" stroke="#d9d9d9" stroke-width="0.8"/>
<text x="71.0" y="132.6" font-size="9.5" fill="#5e5e5e" text-anchor="end" textLength="39.9" lengthAdjust="spacingAndGlyphs">10000000</text>
<path d="M80.4 100.3H277.2" stroke="#d9d9d9" stroke-width="0.8"/>
<text x="71.0" y="103.2" font-size="9.5" fill="#5e5e5e" text-anchor="end" textLength="39.9" lengthAdjust="spacingAndGlyphs">15000000</text>
<path d="M80.4 70.8H277.2" stroke="#d9d9d9" stroke-width="0.8"/>
<text x="71.0" y="73.7" font-size="9.5" fill="#5e5e5e" text-anchor="end" textLength="39.9" lengthAdjust="spacingAndGlyphs">20000000</text>
<path d="M80.4 41.4H277.2" stroke="#d9d9d9" stroke-width="0.8"/>
<text x="71.0" y="44.3" font-size="9.5" fill="#5e5e5e" text-anchor="end" textLength="39.9" lengthAdjust="spacingAndGlyphs">25000000</text>
<path d="M80.4 188.6V41.4" stroke="#d9d9d9" stroke-width="0.8"/>
<path d="M119.8 188.6V41.4" stroke="#d9d9d9" stroke-width="0.8"/>
<path d="M159.1 188.6V41.4" stroke="#d9d9d9" stroke-width="0.8"/>
<path d="M198.5 188.6V41.4" stroke="#d9d9d9" stroke-width="0.8"/>
<path d="M237.8 188.6V41.4" stroke="#d9d9d9" stroke-width="0.8"/>
<path d="M277.2 188.6V41.4" stroke="#d9d9d9" stroke-width="0.8"/>
<text x="80.4" y="205.5" font-size="9.3" fill="#5e5e5e" text-anchor="middle">0</text>
<text x="119.8" y="205.5" font-size="9.3" fill="#5e5e5e" text-anchor="middle">0.5</text>
<text x="159.1" y="205.5" font-size="9.3" fill="#5e5e5e" text-anchor="middle">1</text>
<text x="198.5" y="205.5" font-size="9.3" fill="#5e5e5e" text-anchor="middle">1.5</text>
<text x="237.8" y="205.5" font-size="9.3" fill="#5e5e5e" text-anchor="middle">2</text>
<text x="277.2" y="205.5" font-size="9.3" fill="#5e5e5e" text-anchor="middle">2.5</text>
<path d="M80.6 52.0V135.0 M80.4 52.0h2.2 M80.4 135.0h2.2" stroke="#6aa5da" stroke-width="0.8" fill="none" opacity="0.7"/>
<path d="M100.1 52.0V135.0 M97.9 52.0h4.4 M97.9 135.0h4.4" stroke="#6aa5da" stroke-width="0.8" fill="none"/>
<path d="M119.8 52.0V135.0 M117.6 52.0h4.4 M117.6 135.0h4.4" stroke="#6aa5da" stroke-width="0.8" fill="none"/>
<path d="M159.1 52.0V135.0 M156.9 52.0h4.4 M156.9 135.0h4.4" stroke="#6aa5da" stroke-width="0.8" fill="none"/>
<path d="M237.8 52.0V135.0 M235.6 52.0h4.4 M235.6 135.0h4.4" stroke="#6aa5da" stroke-width="0.8" fill="none"/>
<path d="M80.4 118.5L237.8 51.4" stroke="#5b9bd5" stroke-width="1.6" stroke-linecap="round" stroke-dasharray="0.1 3.3" fill="none"/>
<circle cx="80.4" cy="165.6" r="3.1" fill="#5b9bd5"/>
<circle cx="100.1" cy="92.0" r="3.1" fill="#5b9bd5"/>
<circle cx="119.8" cy="76.7" r="3.1" fill="#5b9bd5"/>
<circle cx="159.1" cy="62.0" r="3.1" fill="#5b9bd5"/>
<circle cx="237.8" cy="71.4" r="3.1" fill="#5b9bd5"/>
<text x="58.4" y="23.1" font-size="13.7" fill="#5e5e5e" textLength="178.4" lengthAdjust="spacingAndGlyphs">Dot Plot 2: Curve Calibration</text>
<text x="142.1" y="160.9" font-size="8.8" fill="#5e5e5e" textLength="76.9" lengthAdjust="spacingAndGlyphs">y = 6E+06x + 1E+07</text>
<text transform="translate(25.3 202.6) rotate(-90)" font-size="10.8" fill="#484848" textLength="158.6" lengthAdjust="spacingAndGlyphs">Mean Rawintden Drop-Background</text>
<text x="92.3" y="222.1" font-size="10.6" fill="#5e5e5e" textLength="172.4" lengthAdjust="spacingAndGlyphs">Initial Calf Thymus DNA Concentration</text>
<text x="139.9" y="235.1" font-size="10.6" fill="#5e5e5e" textLength="77.2" lengthAdjust="spacingAndGlyphs">(micrograms/mL)</text></svg>
</div>
<div class="sec" id="sheettabs" style="top:401.4px;height:11.2px;background:#e6e6e6;">
<div class="b" style="left:0.0px;top:0.0px;width:800.0px;height:0.8px;background:#d0d0d0;"></div>
<svg class="b" style="left:6.0px;top:3.1px" width="5" height="6" viewBox="0 0 5 6"><path d="M3.6 0.8l-2.4 2.2 2.4 2.2" fill="none" stroke="#b0b0b0" stroke-width="0.8"/></svg>
<svg class="b" style="left:17.0px;top:3.1px" width="5" height="6" viewBox="0 0 5 6"><path d="M1.2 0.8l2.4 2.2-2.4 2.2" fill="none" stroke="#b0b0b0" stroke-width="0.8"/></svg>
<div class="b" style="left:190.0px;top:0.4px;width:61.4px;height:10.8px;background:#fff;border-bottom:1.2px solid #217346;box-sizing:border-box;"></div>
<span class="t" style="left:41.0px;top:2.7px;font-size:6.6px;color:#4a4a4a;transform:scaleX(1.028);">Solutions for Calibration</span>
<span class="t" style="left:124.0px;top:2.7px;font-size:6.6px;color:#4a4a4a;transform:scaleX(0.984);">Table1 Cal Raw Data</span>
<span class="t" style="left:256.0px;top:2.7px;font-size:6.6px;color:#4a4a4a;transform:scaleX(0.967);">PCR Solutions</span>
<span class="t" style="left:307.0px;top:2.7px;font-size:6.6px;color:#4a4a4a;transform:scaleX(0.969);">Table3 PCR Raw Data</span>
<span class="t" style="left:380.5px;top:2.7px;font-size:6.6px;color:#4a4a4a;transform:scaleX(0.976);">Table4 PCR Means</span>
<span class="t" style="left:445.5px;top:2.7px;font-size:6.6px;color:#4a4a4a;transform:scaleX(0.970);">Table5 PCR Solved</span>
<span class="t" style="left:193.0px;top:2.5px;font-size:6.6px;color:#217346;transform:scaleX(1.020);font-weight:bold;">Table2 Cal Means</span>
<div class="b" style="left:36.0px;top:2.0px;width:0.8px;height:7.6px;background:#c4c4c4;"></div>
<div class="b" style="left:118.4px;top:2.0px;width:0.8px;height:7.6px;background:#c4c4c4;"></div>
<div class="b" style="left:302.0px;top:2.0px;width:0.8px;height:7.6px;background:#c4c4c4;"></div>
<div class="b" style="left:376.0px;top:2.0px;width:0.8px;height:7.6px;background:#c4c4c4;"></div>
<div class="b" style="left:441.5px;top:2.0px;width:0.8px;height:7.6px;background:#c4c4c4;"></div>
<div class="b" style="left:507.0px;top:2.0px;width:0.8px;height:7.6px;background:#c4c4c4;"></div>
<svg class="b" style="left:517.5px;top:1.2px" width="9" height="9" viewBox="0 0 9 9"><circle cx="4.5" cy="4.5" r="3.6" fill="none" stroke="#888" stroke-width="0.7"/><path d="M4.5 2.6v3.8M2.6 4.5h3.8" stroke="#777" stroke-width="0.7"/></svg>
<div class="b" style="left:683.0px;top:3.0px;width:0.8px;height:0.8px;background:#b5b5b5;"></div>
<div class="b" style="left:683.0px;top:5.2px;width:0.8px;height:0.8px;background:#b5b5b5;"></div>
<div class="b" style="left:683.0px;top:7.4px;width:0.8px;height:0.8px;background:#b5b5b5;"></div>
<div class="b" style="left:688.8px;top:0.8px;width:101.6px;height:10.4px;background:#cfcfcf;"></div>
<div class="b" style="left:688.8px;top:0.8px;width:8.6px;height:10.4px;background:#fafafa;"></div>
<svg class="b" style="left:690.4px;top:3.2px" width="5" height="6" viewBox="0 0 5 6"><path d="M3.8 0.6l-2.8 2.3 2.8 2.3z" fill="#555"/></svg>
<div class="b" style="left:730.0px;top:0.8px;width:47.6px;height:10.4px;background:#fcfcfc;"></div>
<div class="b" style="left:777.6px;top:0.8px;width:3.6px;height:10.4px;background:#ececec;"></div>
<div class="b" style="left:781.2px;top:0.8px;width:9.2px;height:10.4px;background:#fafafa;"></div>
<svg class="b" style="left:783.6px;top:3.2px" width="5" height="6" viewBox="0 0 5 6"><path d="M1.2 0.6l2.8 2.3-2.8 2.3z" fill="#555"/></svg>
<div class="b" style="left:790.6px;top:0.0px;width:9.4px;height:11.2px;background:#f3f3f3;"></div>
</div>
<div class="sec" id="statusbar" style="top:412.6px;height:16.2px;background:#f3f3f3;">
<span class="t" style="left:3.4px;top:5.0px;font-size:6.0px;color:#444;transform:scaleX(0.842);">Ready</span>
<div class="b" style="left:666.0px;top:0.0px;width:15.4px;height:16.2px;background:#c8c8c8;"></div>
<svg class="b" style="left:669.4px;top:4.0px" width="9" height="8" viewBox="0 0 9 8"><rect x="0.5" y="0.5" width="7.8" height="6.6" fill="none" stroke="#888" stroke-width="0.7"/><path d="M3.1 0.5v6.6M5.7 0.5v6.6M0.5 2.7h7.8M0.5 4.9h7.8" stroke="#999" stroke-width="0.5"/></svg>
<svg class="b" style="left:685.0px;top:4.0px" width="9" height="8" viewBox="0 0 9 8"><rect x="0.5" y="0.5" width="7.8" height="6.6" fill="none" stroke="#aaa" stroke-width="0.7"/><rect x="2.4" y="2" width="4" height="3.6" fill="none" stroke="#999" stroke-width="0.6"/></svg>
<svg class="b" style="left:701.0px;top:4.0px" width="9" height="8" viewBox="0 0 9 8"><rect x="0.5" y="0.5" width="7.8" height="6.6" fill="none" stroke="#aaa" stroke-width="0.7"/><path d="M0.5 4.4h3.4v-3.9" stroke="#999" stroke-width="0.6" fill="none"/></svg>
<div class="b" style="left:715.6px;top:7.8px;width:3.0px;height:0.9px;background:#555;"></div>
<div class="b" style="left:722.0px;top:7.9px;width:50.6px;height:0.7px;background:#a8a8a8;"></div>
<div class="b" style="left:750.2px;top:4.4px;width:2.2px;height:7.6px;background:#666;"></div>
<div class="b" style="left:774.6px;top:7.8px;width:3.4px;height:0.9px;background:#555;"></div>
<div class="b" style="left:775.9px;top:6.5px;width:0.9px;height:3.5px;background:#555;"></div>
<span class="t" style="left:783.6px;top:4.8px;font-size:6.4px;color:#555;transform:scaleX(0.819);">160%</span>
</div>
<div class="sec" id="taskbar" style="top:428.8px;height:21.2px;background:#0f0f10;">
<div class="b" style="left:0.0px;top:0.0px;width:24.4px;height:21.2px;background:#000;"></div>
<svg class="b" style="left:7.4px;top:5.8px" width="10" height="10" viewBox="0 0 10 10"><path d="M0.4 1.6l3.8-0.5v3.5h-3.8z M4.8 1l4.6-0.7v4.3h-4.6z M0.4 5.2h3.8v3.5l-3.8-0.5z M4.8 5.2h4.6v4.3l-4.6-0.7z" fill="#fff"/></svg>
<div class="b" style="left:24.4px;top:0.0px;width:179.4px;height:21.2px;background:#f2f2f2;"></div>
<svg class="b" style="left:29.6px;top:4.2px" width="14" height="14" viewBox="0 0 14 14"><circle cx="7" cy="7" r="5.2" fill="none" stroke="#111" stroke-width="1.4"/></svg>
<span class="t" style="left:48.4px;top:7.1px;font-size:7.4px;color:#3c3c3c;transform:scaleX(1.006);">Type here to search</span>
<svg class="b" style="left:188.6px;top:4.8px" width="7" height="12" viewBox="0 0 7 12"><rect x="2.2" y="0.8" width="2.6" height="6" rx="1.3" fill="none" stroke="#555" stroke-width="0.8"/><path d="M0.9 5.4c0 3.4 5.2 3.4 5.2 0M3.5 8v2.4M2 10.6h3" fill="none" stroke="#555" stroke-width="0.8"/></svg>
<svg class="b" style="left:211.4px;top:5.8px" width="10" height="10" viewBox="0 0 10 10"><rect x="1" y="1.8" width="5.4" height="5.6" fill="none" stroke="#eee" stroke-width="0.8"/><path d="M0.4 0.4v1.4M0.4 7.4v1.6M7 0.4v1.4M7 7.4v1.6M8.8 2.4v1M8.8 5.8v1.4" stroke="#eee" stroke-width="0.8"/></svg>
<svg class="b" style="left:237.4px;top:4.8px" width="12" height="12" viewBox="0 0 12 12"><circle cx="6" cy="6" r="5.4" fill="#dd4a3b"/><path d="M6 6L1.3 3.3A5.4 5.4 0 0 0 6 11.4z" fill="#2f9f4f"/><path d="M6 6v5.4A5.4 5.4 0 0 0 10.7 3.3z" fill="#f4c22d"/><path d="M1.3 3.3A5.4 5.4 0 0 1 10.7 3.3L6 6z" fill="#dd4a3b"/><circle cx="6" cy="6" r="2.5" fill="#fff"/><circle cx="6" cy="6" r="1.9" fill="#4a86e8"/></svg>
<div class="b" style="left:232.0px;top:20.2px;width:22.6px;height:1.0px;background:#8fb6e0;"></div>
<svg class="b" style="left:263.0px;top:5.2px" width="13" height="11" viewBox="0 0 13 11"><path d="M0.6 1.6h4l1 1h6.6v7.6h-11.6z" fill="#f6c84c"/><rect x="0.6" y="3.8" width="11.6" height="6.4" fill="#fbe08a"/><rect x="3" y="6.4" width="6.8" height="3.8" fill="#4aa0e0"/></svg>
<svg class="b" style="left:289.0px;top:5.0px" width="12" height="12" viewBox="0 0 12 12"><rect x="0.6" y="0.6" width="10.8" height="10.8" rx="1.6" fill="#7a86d8"/><path d="M3 4c2-1 4-1 6 0l0.8 3.8c-0.8 0.6-1.4 0.8-2 0.9l-0.4-0.7h-2.8l-0.4 0.7c-0.6-0.1-1.2-0.3-2-0.9z" fill="#fff"/><circle cx="4.8" cy="6.2" r="0.7" fill="#7a86d8"/><circle cx="7.2" cy="6.2" r="0.7" fill="#7a86d8"/></svg>
<svg class="b" style="left:315.0px;top:4.8px" width="12" height="12" viewBox="0 0 12 12"><circle cx="6" cy="6" r="5.4" fill="#fff"/><circle cx="6" cy="6" r="4.6" fill="none" stroke="#e76fc1" stroke-width="1"/><path d="M5 8.2v-4.6l3-0.7v4.5" fill="none" stroke="#d05ad0" stroke-width="0.8"/><circle cx="4.3" cy="8.2" r="0.9" fill="#d05ad0"/><circle cx="7.3" cy="7.4" r="0.9" fill="#d05ad0"/></svg>
<div class="b" style="left:334.6px;top:0.0px;width:24.2px;height:21.2px;background:#3a3a3a;"></div>
<div class="b" style="left:334.6px;top:20.2px;width:24.2px;height:1.0px;background:#8fb6e0;"></div>
<svg class="b" style="left:340.0px;top:4.8px" width="13" height="12" viewBox="0 0 13 12"><rect x="5" y="1.2" width="7" height="9.6" fill="#fff"/><path d="M5 3.6h7M5 6h7M5 8.4h7M8.6 1.2v9.6" stroke="#217346" stroke-width="0.7"/><path d="M0.6 1.4l6.4-1.2v11.6l-6.4-1.2z" fill="#1f7244"/><path d="M2.4 4l2.6 4M5 4l-2.6 4" stroke="#fff" stroke-width="0.9"/></svg>
<svg class="b" style="left:657.0px;top:5.2px" width="11" height="11" viewBox="0 0 11 11"><circle cx="3.6" cy="5.2" r="1.5" fill="none" stroke="#eee" stroke-width="0.7"/><path d="M0.8 10c0-3.4 5.6-3.4 5.6 0" fill="none" stroke="#eee" stroke-width="0.7"/><circle cx="7.6" cy="2.6" r="1.2" fill="none" stroke="#eee" stroke-width="0.7"/><path d="M6.6 5.2c1.6-1 3.4 0 3.4 1.8" fill="none" stroke="#eee" stroke-width="0.7"/></svg>
<svg class="b" style="left:676.0px;top:7.2px" width="9" height="6" viewBox="0 0 9 6"><path d="M1 4.6l3.4-3.4 3.4 3.4" fill="none" stroke="#eee" stroke-width="0.8"/></svg>
<svg class="b" style="left:688.6px;top:5.6px" width="8" height="10" viewBox="0 0 8 10"><path d="M6.4 0.8v8l-5-4z" fill="#e0383e"/></svg>
<svg class="b" style="left:699.6px;top:6.8px" width="10" height="7" viewBox="0 0 10 7"><rect x="0.5" y="1" width="7.8" height="4.8" fill="none" stroke="#eee" stroke-width="0.7"/><rect x="3.4" y="1.8" width="4.2" height="3.2" fill="#eee"/><rect x="8.4" y="2.4" width="1" height="2" fill="#eee"/></svg>
<svg class="b" style="left:712.6px;top:5.8px" width="11" height="10" viewBox="0 0 11 10"><rect x="1.4" y="0.8" width="8" height="5.4" fill="none" stroke="#eee" stroke-width="0.8"/><path d="M0.4 4v4.6h3.6M5.4 6.2v2.4M3.6 8.6h4" fill="none" stroke="#eee" stroke-width="0.8"/></svg>
<svg class="b" style="left:726.0px;top:6.6px" width="10" height="8" viewBox="0 0 10 8"><path d="M0.6 2.6h1.6l1.8-1.8v6l-1.8-1.8h-1.6z" fill="none" stroke="#eee" stroke-width="0.7"/><path d="M5.8 2.4l2.8 2.8M8.6 2.4l-2.8 2.8" stroke="#eee" stroke-width="0.7"/></svg>
<span class="t" style="left:744.0px;top:2.7px;font-size:7.0px;color:#fff;transform:scaleX(0.829);">4:34 PM</span>
<span class="t" style="left:741.0px;top:12.1px;font-size:7.0px;color:#fff;transform:scaleX(0.914);">11/6/2018</span>
<svg class="b" style="left:777.6px;top:5.2px" width="14" height="14" viewBox="0 0 14 14"><path d="M1.6 1.2h7v5.8h-4.4l-1.6 1.6v-1.6h-1z" fill="none" stroke="#eee" stroke-width="0.8"/><path d="M2.8 2.9h4.6M2.8 4.5h4.6" stroke="#eee" stroke-width="0.6"/><circle cx="9.4" cy="9.6" r="3.2" fill="#0f0f10" stroke="#eee" stroke-width="0.7"/></svg>
<span class="t" style="left:785.6px;top:12.2px;font-size:5.0px;color:#fff;transform:scaleX(1.007);font-weight:bold;">2</span>
</div>

</body>
</html>
